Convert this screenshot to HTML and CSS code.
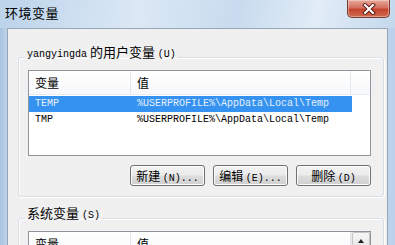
FILE: index.html
```html
<!DOCTYPE html>
<html lang="zh">
<head>
<meta charset="utf-8">
<link rel="stylesheet" href="styles.css">
</head>
<body>
<div class="window">
  <div class="titlebar">
    <span class="title">环境变量</span>
    <div class="close">
      <svg width="14" height="12" viewBox="0 0 14 12"><path d="M3 2 L11 10 M11 2 L3 10" stroke="#5a1e17" stroke-width="4" stroke-linecap="square"/><path d="M3 2 L11 10 M11 2 L3 10" stroke="#fff" stroke-width="2" stroke-linecap="square"/></svg>
    </div>
  </div>
  <div class="frame">
    <div class="panel">
      <fieldset class="group">
        <legend><span class="lat">yangyingda</span> 的用户变量 <span class="lat">(U)</span></legend>
        <div class="list">
          <div class="header">
            <div class="c1">变量</div>
            <div class="c2">值</div>
            <div class="c3"></div>
          </div>
          <div class="row sel"><div class="c1 lat">TEMP</div><div class="c2 lat">%USERPROFILE%\AppData\Local\Temp</div></div>
          <div class="row"><div class="c1 lat">TMP</div><div class="c2 lat">%USERPROFILE%\AppData\Local\Temp</div></div>
        </div>
        <div class="buttons">
          <button class="btn">新建 <span class="lat">(N)...</span></button>
          <button class="btn">编辑 <span class="lat">(E)...</span></button>
          <button class="btn">删除 <span class="lat">(D)</span></button>
        </div>
      </fieldset>
      <fieldset class="group group2">
        <legend>系统变量 <span class="lat">(S)</span></legend>
        <div class="list list2">
          <div class="header">
            <div class="c1">变量</div>
            <div class="c2">值</div>
            <div class="scroll"><div class="up"></div></div>
          </div>
        </div>
      </fieldset>
    </div>
  </div>
</div>
</body>
</html>
```
FILE: styles.css
```css
html, body {
  margin: 0;
  padding: 0;
}
body {
  width: 395px;
  height: 245px;
  overflow: hidden;
  font-family: "Noto Sans CJK SC", sans-serif;
  color: #000;
}
.lat {
  font-family: "Liberation Mono", "Noto Sans CJK SC", monospace;
  font-size: 10px;
}
.window {
  width: 395px;
  height: 245px;
  display: flex;
  flex-direction: column;
  background: linear-gradient(to right, #a9c4e0 0, #bdd3ea 7px, #c9dcef 50%, #bcd2ea 100%);
}
.titlebar {
  height: 28px;
  flex: none;
  display: flex;
  align-items: flex-start;
  background: linear-gradient(100deg, #bcd3ea 0%, #dbe8f5 35%, #c8dbee 60%, #e1ecf7 80%, #c4d8ed 100%);
}
.title {
  font-size: 13px;
  line-height: 17px;
  margin: 4px 0 0 5px;
  letter-spacing: 0.5px;
}
.close {
  margin-left: auto;
  margin-right: 5px;
  width: 41px;
  height: 17px;
  border: 1px solid #7d3a31;
  border-top: none;
  border-radius: 0 0 5px 5px;
  background: linear-gradient(#e8a89b 0%, #d4705f 45%, #c4432f 55%, #d06a4f 100%);
  box-shadow: inset 0 0 0 1px rgba(255,255,255,0.35);
  display: flex;
  align-items: center;
  justify-content: center;
}
.frame {
  flex: 1;
  display: flex;
  padding: 0 7px 0 7px;
  min-height: 0;
}
.panel {
  flex: 1;
  background: #f0f0f0;
  border: 1px solid #97a5b5;
  border-bottom: none;
  padding: 15px 3px 0 10px;
  display: flex;
  flex-direction: column;
}
.group {
  margin: 0;
  padding: 0 12px 10px 9px;
  border: 1px solid #d5dfe5;
  border-radius: 3px;
  box-shadow: inset 1px 1px 0 #fff, 1px 1px 0 #fff;
  min-width: 0;
}
.group legend {
  font-size: 13px;
  line-height: 15px;
  padding: 0 2px 8px 2px;
  margin-left: -3px;
}
.group2 {
  margin-top: 8px;
}
.list {
  height: 84px;
  border: 1px solid #8f959d;
  background: #fff;
}
.header {
  display: flex;
  height: 23px;
  border-bottom: 1px solid #e8ebef;
  background: linear-gradient(#ffffff, #f7f8fa);
  font-size: 12px;
  line-height: 23px;
  margin-bottom: 1px;
}
.header .c1 {
  width: 95px;
  padding-left: 6px;
  border-right: 1px solid #e3e6ea;
}
.header .c2 {
  width: 213px;
  padding-left: 6px;
  border-right: 1px solid #e3e6ea;
}
.header .c3 {
  flex: 1;
}
.row {
  display: flex;
  height: 16px;
  line-height: 16px;
  width: 323px;
}
.row .c1 {
  width: 96px;
  padding-left: 6px;
}
.row .c2 {
  padding-left: 6px;
}
.row.sel {
  background: #3592f0;
  color: #e6f0ff;
}
.buttons {
  display: flex;
  justify-content: flex-end;
  gap: 8px;
  margin-top: 9px;
}
.btn {
  width: 75px;
  height: 21px;
  padding: 0;
  margin: 0;
  border: 1px solid #707070;
  border-radius: 3px;
  background: linear-gradient(#f3f3f3 0%, #ebebeb 48%, #dddddd 52%, #d0d0d0 100%);
  box-shadow: inset 0 0 0 1px #fcfcfc;
  font-family: "Noto Sans CJK SC", sans-serif;
  font-size: 12px;
  line-height: 19px;
  color: #000;
}
.list2 {
  height: 40px;
  border-bottom: none;
}
.list2 .header .c2 {
  width: 213px;
}
.scroll {
  flex: 1;
  display: flex;
  align-items: flex-start;
  justify-content: center;
  background: #eaeaea;
}
.up {
  width: 16px;
  height: 17px;
  border: 1px solid #c6c6c6;
  border-radius: 2px;
  background: linear-gradient(#f6f6f6, #e3e3e3);
  position: relative;
}
.up::after {
  content: "";
  position: absolute;
  left: 5px;
  top: 6px;
  border-left: 3px solid transparent;
  border-right: 3px solid transparent;
  border-bottom: 4px solid #222;
}
```
